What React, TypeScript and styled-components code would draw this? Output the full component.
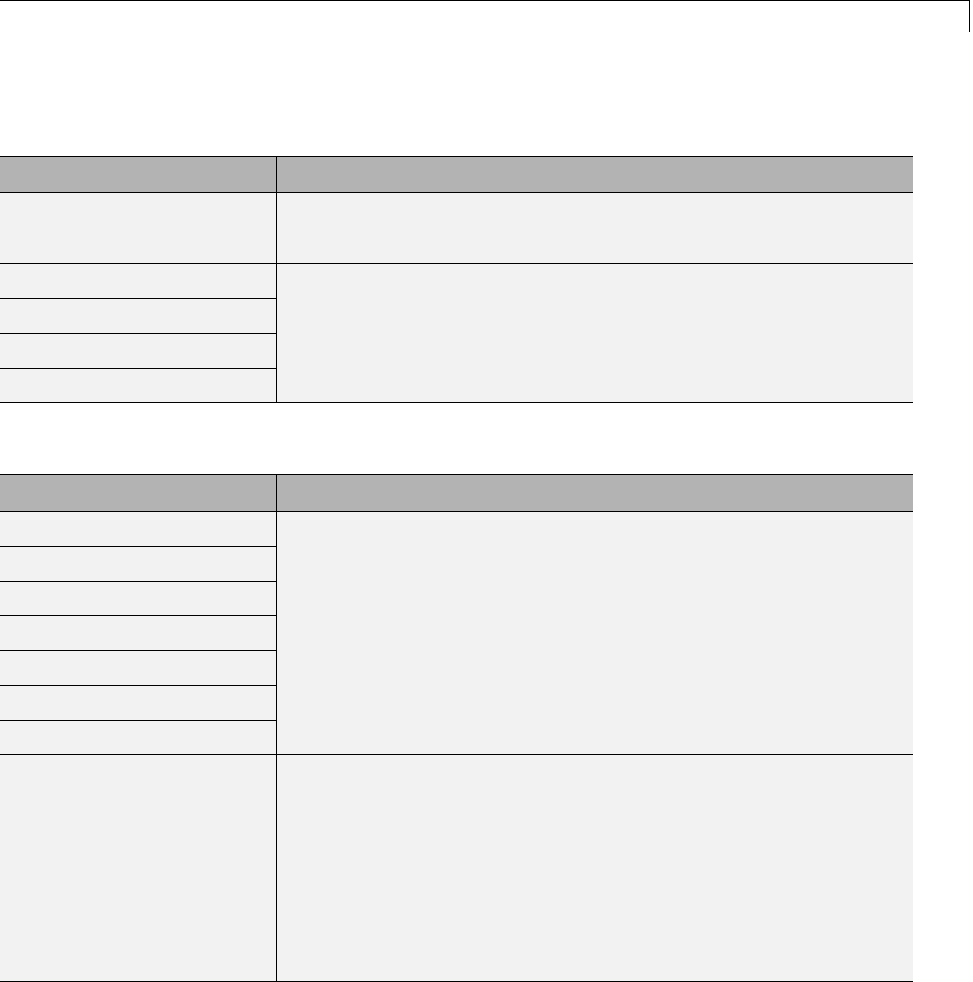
import { Fragment } from "react";
import styled, { createGlobalStyle } from "styled-components";

const GlobalStyle = createGlobalStyle`
	html, body {
		margin: 0;
		padding: 0;
		background: #ffffff;
		font-family: "Liberation Sans", Arial, sans-serif;
	}
`;

interface ISection {
	header: number;
	groups: number[][];
}

// each group is one right-hand cell that spans the left cells listed
const sections: ISection[] = [
	{
		header: 36,
		groups: [[71], [35, 35, 35, 34]],
	},
	{
		header: 37,
		groups: [[35, 35, 34, 35, 35, 35, 34], [227]],
	},
];

const App = () => {
	return (
		<Page>
			<GlobalStyle />
			<RunningHead />

			{sections.map((section, i) => (
				<Table key={i} $first={i === 0}>
					<HeadCell $side="left" $h={section.header} />
					<HeadCell $side="right" $h={section.header} />

					{section.groups.map((group, g) =>
						group.map((h, r) => (
							<Fragment key={`${g}-${r}`}>
								<Cell $h={h} />
								{r === 0 && <SpanCell $rows={group.length} />}
							</Fragment>
						))
					)}
				</Table>
			))}
		</Page>
	);
};

const Page = styled.div`
	display: flex;
	flex-direction: column;
	width: 973px;
	min-height: 982px;
`;

const RunningHead = styled.div`
	box-sizing: border-box;
	width: 970px;
	height: 32px;
	border-top: 1px solid #000;
	border-right: 1px solid #000;
`;

const Table = styled.div<{ $first: boolean }>`
	display: grid;
	grid-template-columns: 277px 636px;
	grid-auto-flow: row;
	width: 913px;
	margin-top: ${({ $first }) => ($first ? "124px" : "71px")};
	border-top: 1px solid #000;
`;

const HeadCell = styled.div<{ $side: "left" | "right"; $h: number }>`
	box-sizing: border-box;
	grid-column: ${({ $side }) => ($side === "left" ? 1 : 2)};
	height: ${({ $h }) => $h}px;
	background: #b3b3b3;
	border-bottom: 1px solid #000;
	border-right: ${({ $side }) => ($side === "left" ? "1px solid #000" : "none")};
`;

const Cell = styled.div<{ $h: number }>`
	box-sizing: border-box;
	grid-column: 1;
	height: ${({ $h }) => $h}px;
	background: #f2f2f2;
	border-bottom: 1px solid #000;
	border-right: 1px solid #000;
`;

const SpanCell = styled.div<{ $rows: number }>`
	box-sizing: border-box;
	grid-column: 2;
	grid-row: span ${({ $rows }) => $rows};
	background: #f2f2f2;
	border-bottom: 1px solid #000;
`;

export default App;
